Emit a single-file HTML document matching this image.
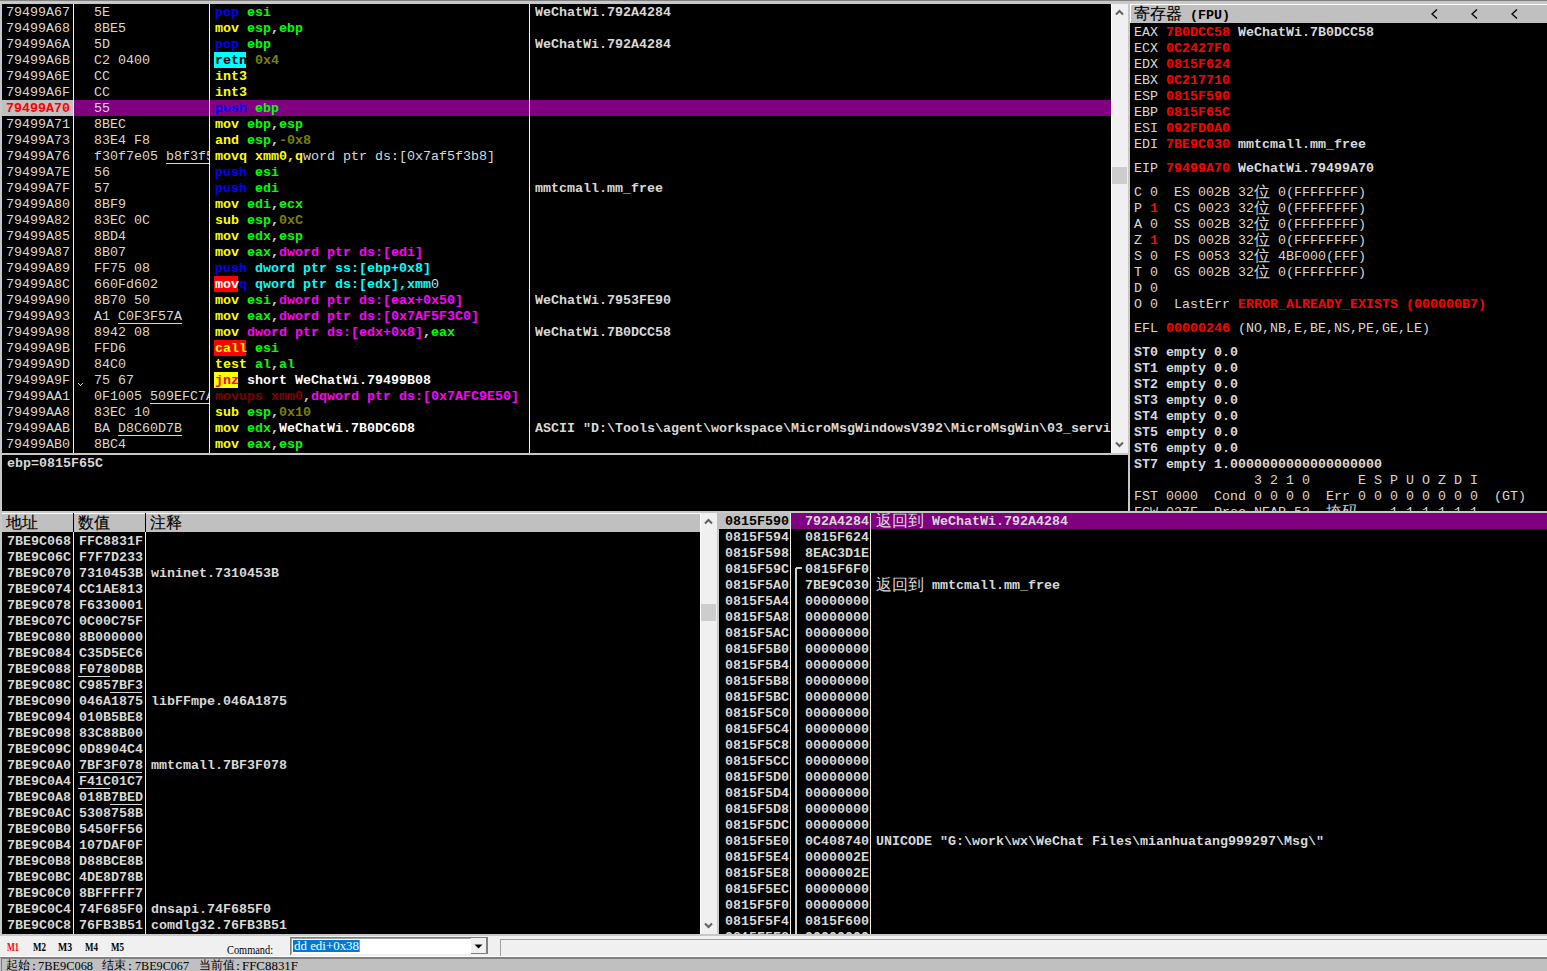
<!DOCTYPE html>
<html><head><meta charset="utf-8"><style>
html,body{margin:0;padding:0}
body{width:1547px;height:971px;position:relative;overflow:hidden;background:#c8c8c8;font-family:"Liberation Mono",monospace;font-size:13.333px;color:#d8d8d8}
.b{position:absolute}
.r{position:absolute;height:16px;line-height:16px;white-space:pre}
.clip{overflow:hidden}
.cj{font-style:normal;display:inline-block;width:16px;text-align:center;font-weight:normal;font-size:16px;line-height:16px;vertical-align:top}
.sf{position:absolute;font-family:"Liberation Serif",serif;font-weight:bold;font-size:12px;line-height:14px;white-space:pre}
.sf2{position:absolute;font-family:"Liberation Serif",serif;font-size:12px;line-height:14px;white-space:pre;color:#000}
.sf3{position:absolute;font-family:"Liberation Serif",serif;font-size:13px;line-height:14px;white-space:pre;color:#fff}
.sf4{position:absolute;font-family:"Liberation Serif",serif;font-size:13px;line-height:14px;white-space:pre;color:#000}
</style></head><body>
<div class="b" style="left:0px;top:0px;width:1547px;height:1px;background:#808080;"></div>
<div class="b" style="left:2px;top:4px;width:1109px;height:449px;background:#000;"></div>
<div class="b" style="left:74px;top:100px;width:1037px;height:16px;background:#800080;"></div>
<div class="b" style="left:2px;top:100px;width:71px;height:16px;background:#c0c0c0;"></div>
<div class="r clip" style="left:6px;top:5px;width:67px"><span style="color:#d8d8d8">79499A67</span></div>
<div class="r clip" style="left:94px;top:5px;width:115px"><span style="color:#d8d8d8">5E</span></div>
<div class="r clip" style="left:215px;top:5px;width:313px"><span style="color:#0000ff;font-weight:bold">pop</span><span style=""> </span><span style="color:#00ff00;font-weight:bold">esi</span></div>
<div class="r clip" style="left:535px;top:5px;width:576px"><span style="color:#d8d8d8;font-weight:bold">WeChatWi.792A4284</span></div>
<div class="r clip" style="left:6px;top:21px;width:67px"><span style="color:#d8d8d8">79499A68</span></div>
<div class="r clip" style="left:94px;top:21px;width:115px"><span style="color:#d8d8d8">8BE5</span></div>
<div class="r clip" style="left:215px;top:21px;width:313px"><span style="color:#ffff00;font-weight:bold">mov</span><span style=""> </span><span style="color:#00ff00;font-weight:bold">esp</span><span style="color:#d8d8d8;font-weight:bold">,</span><span style="color:#00ff00;font-weight:bold">ebp</span></div>
<div class="r clip" style="left:6px;top:37px;width:67px"><span style="color:#d8d8d8">79499A6A</span></div>
<div class="r clip" style="left:94px;top:37px;width:115px"><span style="color:#d8d8d8">5D</span></div>
<div class="r clip" style="left:215px;top:37px;width:313px"><span style="color:#0000ff;font-weight:bold">pop</span><span style=""> </span><span style="color:#00ff00;font-weight:bold">ebp</span></div>
<div class="r clip" style="left:535px;top:37px;width:576px"><span style="color:#d8d8d8;font-weight:bold">WeChatWi.792A4284</span></div>
<div class="r clip" style="left:6px;top:53px;width:67px"><span style="color:#d8d8d8">79499A6B</span></div>
<div class="r clip" style="left:94px;top:53px;width:115px"><span style="color:#d8d8d8">C2 0400</span></div>
<div class="b" style="left:214px;top:52px;width:32px;height:16px;background:#00ffff;"></div>
<div class="r clip" style="left:215px;top:53px;width:313px"><span style="color:#000;font-weight:bold">retn</span><span style=""> </span><span style="color:#808000;font-weight:bold">0x4</span></div>
<div class="r clip" style="left:6px;top:69px;width:67px"><span style="color:#d8d8d8">79499A6E</span></div>
<div class="r clip" style="left:94px;top:69px;width:115px"><span style="color:#d8d8d8">CC</span></div>
<div class="r clip" style="left:215px;top:69px;width:313px"><span style="color:#ffff00;font-weight:bold">int3</span></div>
<div class="r clip" style="left:6px;top:85px;width:67px"><span style="color:#d8d8d8">79499A6F</span></div>
<div class="r clip" style="left:94px;top:85px;width:115px"><span style="color:#d8d8d8">CC</span></div>
<div class="r clip" style="left:215px;top:85px;width:313px"><span style="color:#ffff00;font-weight:bold">int3</span></div>
<div class="r clip" style="left:6px;top:101px;width:67px"><span style="color:#ff0000;font-weight:bold">79499A70</span></div>
<div class="r clip" style="left:94px;top:101px;width:115px"><span style="color:#d8d8d8">55</span></div>
<div class="r clip" style="left:215px;top:101px;width:313px"><span style="color:#0000ff;font-weight:bold">push</span><span style=""> </span><span style="color:#00ff00;font-weight:bold">ebp</span></div>
<div class="r clip" style="left:6px;top:117px;width:67px"><span style="color:#d8d8d8">79499A71</span></div>
<div class="r clip" style="left:94px;top:117px;width:115px"><span style="color:#d8d8d8">8BEC</span></div>
<div class="r clip" style="left:215px;top:117px;width:313px"><span style="color:#ffff00;font-weight:bold">mov</span><span style=""> </span><span style="color:#00ff00;font-weight:bold">ebp</span><span style="color:#d8d8d8;font-weight:bold">,</span><span style="color:#00ff00;font-weight:bold">esp</span></div>
<div class="r clip" style="left:6px;top:133px;width:67px"><span style="color:#d8d8d8">79499A73</span></div>
<div class="r clip" style="left:94px;top:133px;width:115px"><span style="color:#d8d8d8">83E4 F8</span></div>
<div class="r clip" style="left:215px;top:133px;width:313px"><span style="color:#ffff00;font-weight:bold">and</span><span style=""> </span><span style="color:#00ff00;font-weight:bold">esp</span><span style="color:#d8d8d8;font-weight:bold">,</span><span style="color:#808000;font-weight:bold">-0x8</span></div>
<div class="r clip" style="left:6px;top:149px;width:67px"><span style="color:#d8d8d8">79499A76</span></div>
<div class="b" style="left:166px;top:163px;width:43px;height:1px;background:#d8d8d8;"></div>
<div class="r clip" style="left:94px;top:149px;width:115px"><span style="color:#d8d8d8">f30f7e05 </span><span style="color:#d8d8d8">b8f3f5</span></div>
<div class="r clip" style="left:215px;top:149px;width:313px"><span style="color:#ffff00;font-weight:bold">movq xmm0,q</span><span style="color:#d8d8d8">word ptr ds:[0x7af5f3b8]</span></div>
<div class="r clip" style="left:6px;top:165px;width:67px"><span style="color:#d8d8d8">79499A7E</span></div>
<div class="r clip" style="left:94px;top:165px;width:115px"><span style="color:#d8d8d8">56</span></div>
<div class="r clip" style="left:215px;top:165px;width:313px"><span style="color:#0000ff;font-weight:bold">push</span><span style=""> </span><span style="color:#00ff00;font-weight:bold">esi</span></div>
<div class="r clip" style="left:6px;top:181px;width:67px"><span style="color:#d8d8d8">79499A7F</span></div>
<div class="r clip" style="left:94px;top:181px;width:115px"><span style="color:#d8d8d8">57</span></div>
<div class="r clip" style="left:215px;top:181px;width:313px"><span style="color:#0000ff;font-weight:bold">push</span><span style=""> </span><span style="color:#00ff00;font-weight:bold">edi</span></div>
<div class="r clip" style="left:535px;top:181px;width:576px"><span style="color:#d8d8d8;font-weight:bold">mmtcmall.mm_free</span></div>
<div class="r clip" style="left:6px;top:197px;width:67px"><span style="color:#d8d8d8">79499A80</span></div>
<div class="r clip" style="left:94px;top:197px;width:115px"><span style="color:#d8d8d8">8BF9</span></div>
<div class="r clip" style="left:215px;top:197px;width:313px"><span style="color:#ffff00;font-weight:bold">mov</span><span style=""> </span><span style="color:#00ff00;font-weight:bold">edi</span><span style="color:#d8d8d8;font-weight:bold">,</span><span style="color:#00ff00;font-weight:bold">ecx</span></div>
<div class="r clip" style="left:6px;top:213px;width:67px"><span style="color:#d8d8d8">79499A82</span></div>
<div class="r clip" style="left:94px;top:213px;width:115px"><span style="color:#d8d8d8">83EC 0C</span></div>
<div class="r clip" style="left:215px;top:213px;width:313px"><span style="color:#ffff00;font-weight:bold">sub</span><span style=""> </span><span style="color:#00ff00;font-weight:bold">esp</span><span style="color:#d8d8d8;font-weight:bold">,</span><span style="color:#808000;font-weight:bold">0xC</span></div>
<div class="r clip" style="left:6px;top:229px;width:67px"><span style="color:#d8d8d8">79499A85</span></div>
<div class="r clip" style="left:94px;top:229px;width:115px"><span style="color:#d8d8d8">8BD4</span></div>
<div class="r clip" style="left:215px;top:229px;width:313px"><span style="color:#ffff00;font-weight:bold">mov</span><span style=""> </span><span style="color:#00ff00;font-weight:bold">edx</span><span style="color:#d8d8d8;font-weight:bold">,</span><span style="color:#00ff00;font-weight:bold">esp</span></div>
<div class="r clip" style="left:6px;top:245px;width:67px"><span style="color:#d8d8d8">79499A87</span></div>
<div class="r clip" style="left:94px;top:245px;width:115px"><span style="color:#d8d8d8">8B07</span></div>
<div class="r clip" style="left:215px;top:245px;width:313px"><span style="color:#ffff00;font-weight:bold">mov</span><span style=""> </span><span style="color:#00ff00;font-weight:bold">eax</span><span style="color:#d8d8d8;font-weight:bold">,</span><span style="color:#ff00ff;font-weight:bold">dword ptr ds:[edi]</span></div>
<div class="r clip" style="left:6px;top:261px;width:67px"><span style="color:#d8d8d8">79499A89</span></div>
<div class="r clip" style="left:94px;top:261px;width:115px"><span style="color:#d8d8d8">FF75 08</span></div>
<div class="r clip" style="left:215px;top:261px;width:313px"><span style="color:#0000ff;font-weight:bold">push</span><span style=""> </span><span style="color:#00ffff;font-weight:bold">dword ptr ss:[ebp+0x8]</span></div>
<div class="r clip" style="left:6px;top:277px;width:67px"><span style="color:#d8d8d8">79499A8C</span></div>
<div class="r clip" style="left:94px;top:277px;width:115px"><span style="color:#d8d8d8">660Fd602</span></div>
<div class="b" style="left:214px;top:276px;width:24px;height:16px;background:#ff0000;"></div>
<div class="r clip" style="left:215px;top:277px;width:313px"><span style="color:#ffffff;font-weight:bold">mov</span><span style="color:#0000ff;font-weight:bold">q</span><span style=""> </span><span style="color:#00ffff;font-weight:bold">qword ptr ds:[edx],xmm</span><span style="color:#d8d8d8">0</span></div>
<div class="r clip" style="left:6px;top:293px;width:67px"><span style="color:#d8d8d8">79499A90</span></div>
<div class="r clip" style="left:94px;top:293px;width:115px"><span style="color:#d8d8d8">8B70 50</span></div>
<div class="r clip" style="left:215px;top:293px;width:313px"><span style="color:#ffff00;font-weight:bold">mov</span><span style=""> </span><span style="color:#00ff00;font-weight:bold">esi</span><span style="color:#d8d8d8;font-weight:bold">,</span><span style="color:#ff00ff;font-weight:bold">dword ptr ds:[eax+0x50]</span></div>
<div class="r clip" style="left:535px;top:293px;width:576px"><span style="color:#d8d8d8;font-weight:bold">WeChatWi.7953FE90</span></div>
<div class="r clip" style="left:6px;top:309px;width:67px"><span style="color:#d8d8d8">79499A93</span></div>
<div class="b" style="left:118px;top:323px;width:64px;height:1px;background:#d8d8d8;"></div>
<div class="r clip" style="left:94px;top:309px;width:115px"><span style="color:#d8d8d8">A1 </span><span style="color:#d8d8d8">C0F3F57A</span></div>
<div class="r clip" style="left:215px;top:309px;width:313px"><span style="color:#ffff00;font-weight:bold">mov</span><span style=""> </span><span style="color:#00ff00;font-weight:bold">eax</span><span style="color:#d8d8d8;font-weight:bold">,</span><span style="color:#ff00ff;font-weight:bold">dword ptr ds:[0x7AF5F3C0]</span></div>
<div class="r clip" style="left:6px;top:325px;width:67px"><span style="color:#d8d8d8">79499A98</span></div>
<div class="r clip" style="left:94px;top:325px;width:115px"><span style="color:#d8d8d8">8942 08</span></div>
<div class="r clip" style="left:215px;top:325px;width:313px"><span style="color:#ffff00;font-weight:bold">mov</span><span style=""> </span><span style="color:#ff00ff;font-weight:bold">dword ptr ds:[edx+0x8]</span><span style="color:#d8d8d8;font-weight:bold">,</span><span style="color:#00ff00;font-weight:bold">eax</span></div>
<div class="r clip" style="left:535px;top:325px;width:576px"><span style="color:#d8d8d8;font-weight:bold">WeChatWi.7B0DCC58</span></div>
<div class="r clip" style="left:6px;top:341px;width:67px"><span style="color:#d8d8d8">79499A9B</span></div>
<div class="r clip" style="left:94px;top:341px;width:115px"><span style="color:#d8d8d8">FFD6</span></div>
<div class="b" style="left:214px;top:340px;width:32px;height:16px;background:#ff0000;"></div>
<div class="r clip" style="left:215px;top:341px;width:313px"><span style="color:#ffff00;font-weight:bold">call</span><span style=""> </span><span style="color:#00ff00;font-weight:bold">esi</span></div>
<div class="r clip" style="left:6px;top:357px;width:67px"><span style="color:#d8d8d8">79499A9D</span></div>
<div class="r clip" style="left:94px;top:357px;width:115px"><span style="color:#d8d8d8">84C0</span></div>
<div class="r clip" style="left:215px;top:357px;width:313px"><span style="color:#ffff00;font-weight:bold">test</span><span style=""> </span><span style="color:#00ff00;font-weight:bold">al</span><span style="color:#d8d8d8;font-weight:bold">,</span><span style="color:#00ff00;font-weight:bold">al</span></div>
<div class="r clip" style="left:6px;top:373px;width:67px"><span style="color:#d8d8d8">79499A9F</span></div>
<div class="r clip" style="left:94px;top:373px;width:115px"><span style="color:#d8d8d8">75 67</span></div>
<div class="b" style="left:214px;top:372px;width:24px;height:16px;background:#ffff00;"></div>
<div class="r clip" style="left:215px;top:373px;width:313px"><span style="color:#ff0000;font-weight:bold">jnz</span><span style="color:#ffffff;font-weight:bold"> short WeChatWi.79499B08</span></div>
<div class="r clip" style="left:6px;top:389px;width:67px"><span style="color:#d8d8d8">79499AA1</span></div>
<div class="b" style="left:150px;top:403px;width:59px;height:1px;background:#d8d8d8;"></div>
<div class="r clip" style="left:94px;top:389px;width:115px"><span style="color:#d8d8d8">0F1005 </span><span style="color:#d8d8d8">509EFC7A</span></div>
<div class="r clip" style="left:215px;top:389px;width:313px"><span style="color:#800000;font-weight:bold">movups xmm0</span><span style="color:#d8d8d8;font-weight:bold">,</span><span style="color:#ff00ff;font-weight:bold">dqword ptr ds:[0x7AFC9E50]</span></div>
<div class="r clip" style="left:6px;top:405px;width:67px"><span style="color:#d8d8d8">79499AA8</span></div>
<div class="r clip" style="left:94px;top:405px;width:115px"><span style="color:#d8d8d8">83EC 10</span></div>
<div class="r clip" style="left:215px;top:405px;width:313px"><span style="color:#ffff00;font-weight:bold">sub</span><span style=""> </span><span style="color:#00ff00;font-weight:bold">esp</span><span style="color:#d8d8d8;font-weight:bold">,</span><span style="color:#808000;font-weight:bold">0x10</span></div>
<div class="r clip" style="left:6px;top:421px;width:67px"><span style="color:#d8d8d8">79499AAB</span></div>
<div class="b" style="left:118px;top:435px;width:64px;height:1px;background:#d8d8d8;"></div>
<div class="r clip" style="left:94px;top:421px;width:115px"><span style="color:#d8d8d8">BA </span><span style="color:#d8d8d8">D8C60D7B</span></div>
<div class="r clip" style="left:215px;top:421px;width:313px"><span style="color:#ffff00;font-weight:bold">mov</span><span style=""> </span><span style="color:#00ff00;font-weight:bold">edx</span><span style="color:#d8d8d8;font-weight:bold">,</span><span style="color:#ffffff;font-weight:bold">WeChatWi.7B0DC6D8</span></div>
<div class="r clip" style="left:535px;top:421px;width:576px"><span style="color:#d8d8d8;font-weight:bold">ASCII "D:\Tools\agent\workspace\MicroMsgWindowsV392\MicroMsgWin\03_services</span></div>
<div class="r clip" style="left:6px;top:437px;width:67px"><span style="color:#d8d8d8">79499AB0</span></div>
<div class="r clip" style="left:94px;top:437px;width:115px"><span style="color:#d8d8d8">8BC4</span></div>
<div class="r clip" style="left:215px;top:437px;width:313px"><span style="color:#ffff00;font-weight:bold">mov</span><span style=""> </span><span style="color:#00ff00;font-weight:bold">eax</span><span style="color:#d8d8d8;font-weight:bold">,</span><span style="color:#00ff00;font-weight:bold">esp</span></div>
<div class="b" style="left:73px;top:4px;width:1px;height:449px;background:#f0f0f0;"></div>
<div class="b" style="left:209px;top:4px;width:1px;height:449px;background:#f0f0f0;"></div>
<div class="b" style="left:529px;top:4px;width:1px;height:449px;background:#f0f0f0;"></div>
<div class="b" style="left:78px;top:383px;width:1px;height:1px;background:#d0d0d0;"></div>
<div class="b" style="left:79px;top:384px;width:1px;height:1px;background:#d0d0d0;"></div>
<div class="b" style="left:80px;top:385px;width:1px;height:1px;background:#d0d0d0;"></div>
<div class="b" style="left:81px;top:384px;width:1px;height:1px;background:#d0d0d0;"></div>
<div class="b" style="left:82px;top:383px;width:1px;height:1px;background:#d0d0d0;"></div>
<div class="b" style="left:1111px;top:4px;width:17px;height:449px;background:#f0f0f0;"></div>
<div class="b" style="left:1111px;top:4px;width:1px;height:449px;background:#ffffff;"></div>
<div class="b" style="left:1112px;top:167px;width:15px;height:17px;background:#cdcdcd;"></div>
<svg class="b" style="left:1115px;top:9px" width="9" height="7"><path d="M1 5.5 L4.5 2 L8 5.5" stroke="#606060" fill="none" stroke-width="2"/></svg>
<svg class="b" style="left:1115px;top:441px" width="9" height="7"><path d="M1 1.5 L4.5 5 L8 1.5" stroke="#606060" fill="none" stroke-width="2"/></svg>
<div class="b" style="left:2px;top:455px;width:1126px;height:56px;background:#000;"></div>
<div class="r" style="left:7px;top:456px;"><span style="color:#d8d8d8;font-weight:bold">ebp=0815F65C</span></div>
<div class="b" style="left:1130px;top:4px;width:417px;height:507px;background:#000;"></div>
<div class="b" style="left:1130px;top:4px;width:417px;height:19px;background:#c0c0c0;"></div>
<div class="b" style="left:1130px;top:4px;width:417px;height:1px;background:#ffffff;"></div>
<div class="b" style="left:1130px;top:4px;width:1px;height:19px;background:#ffffff;"></div>
<div class="r" style="left:1134px;top:7px;line-height:18px;height:18px"><span style="color:#000;-webkit-text-stroke:0.15px #000"><i class="cj">寄</i><i class="cj">存</i><i class="cj">器</i> </span><span style="color:#000;font-weight:bold">(FPU)</span></div>
<svg class="b" style="left:1431px;top:9px" width="7" height="10"><path d="M6 0.5 L1 5 L6 9.5" stroke="#000" fill="none" stroke-width="1.3"/></svg>
<svg class="b" style="left:1471px;top:9px" width="7" height="10"><path d="M6 0.5 L1 5 L6 9.5" stroke="#000" fill="none" stroke-width="1.3"/></svg>
<svg class="b" style="left:1511px;top:9px" width="7" height="10"><path d="M6 0.5 L1 5 L6 9.5" stroke="#000" fill="none" stroke-width="1.3"/></svg>
<div class="r" style="left:1134px;top:25px;"><span style="color:#d8d8d8">EAX </span><span style="color:#ff0000;font-weight:bold">7B0DCC58</span><span style="color:#d8d8d8;font-weight:bold"> WeChatWi.7B0DCC58</span></div>
<div class="r" style="left:1134px;top:41px;"><span style="color:#d8d8d8">ECX </span><span style="color:#ff0000;font-weight:bold">0C2427F0</span></div>
<div class="r" style="left:1134px;top:57px;"><span style="color:#d8d8d8">EDX </span><span style="color:#ff0000;font-weight:bold">0815F624</span></div>
<div class="r" style="left:1134px;top:73px;"><span style="color:#d8d8d8">EBX </span><span style="color:#ff0000;font-weight:bold">0C217710</span></div>
<div class="r" style="left:1134px;top:89px;"><span style="color:#d8d8d8">ESP </span><span style="color:#ff0000;font-weight:bold">0815F590</span></div>
<div class="r" style="left:1134px;top:105px;"><span style="color:#d8d8d8">EBP </span><span style="color:#ff0000;font-weight:bold">0815F65C</span></div>
<div class="r" style="left:1134px;top:121px;"><span style="color:#d8d8d8">ESI </span><span style="color:#ff0000;font-weight:bold">092FD0A0</span></div>
<div class="r" style="left:1134px;top:137px;"><span style="color:#d8d8d8">EDI </span><span style="color:#ff0000;font-weight:bold">7BE9C030</span><span style="color:#d8d8d8;font-weight:bold"> mmtcmall.mm_free</span></div>
<div class="r" style="left:1134px;top:161px;"><span style="color:#d8d8d8">EIP </span><span style="color:#ff0000;font-weight:bold">79499A70</span><span style="color:#d8d8d8;font-weight:bold"> WeChatWi.79499A70</span></div>
<div class="r" style="left:1134px;top:185px;"><span style="color:#d8d8d8">C </span><span style="color:#d8d8d8">0</span><span style="color:#d8d8d8">  ES 002B 32</span><span style="color:#d8d8d8"><i class="cj">位</i></span><span style="color:#d8d8d8"> 0(FFFFFFFF)</span></div>
<div class="r" style="left:1134px;top:201px;"><span style="color:#d8d8d8">P </span><span style="color:#ff0000;font-weight:bold">1</span><span style="color:#d8d8d8">  CS 0023 32</span><span style="color:#d8d8d8"><i class="cj">位</i></span><span style="color:#d8d8d8"> 0(FFFFFFFF)</span></div>
<div class="r" style="left:1134px;top:217px;"><span style="color:#d8d8d8">A </span><span style="color:#d8d8d8">0</span><span style="color:#d8d8d8">  SS 002B 32</span><span style="color:#d8d8d8"><i class="cj">位</i></span><span style="color:#d8d8d8"> 0(FFFFFFFF)</span></div>
<div class="r" style="left:1134px;top:233px;"><span style="color:#d8d8d8">Z </span><span style="color:#ff0000;font-weight:bold">1</span><span style="color:#d8d8d8">  DS 002B 32</span><span style="color:#d8d8d8"><i class="cj">位</i></span><span style="color:#d8d8d8"> 0(FFFFFFFF)</span></div>
<div class="r" style="left:1134px;top:249px;"><span style="color:#d8d8d8">S </span><span style="color:#d8d8d8">0</span><span style="color:#d8d8d8">  FS 0053 32</span><span style="color:#d8d8d8"><i class="cj">位</i></span><span style="color:#d8d8d8"> 4BF000(FFF)</span></div>
<div class="r" style="left:1134px;top:265px;"><span style="color:#d8d8d8">T </span><span style="color:#d8d8d8">0</span><span style="color:#d8d8d8">  GS 002B 32</span><span style="color:#d8d8d8"><i class="cj">位</i></span><span style="color:#d8d8d8"> 0(FFFFFFFF)</span></div>
<div class="r" style="left:1134px;top:281px;"><span style="color:#d8d8d8">D </span><span style="color:#d8d8d8">0</span></div>
<div class="r" style="left:1134px;top:297px;"><span style="color:#d8d8d8">O 0  LastErr </span><span style="color:#ff0000;font-weight:bold">ERROR_ALREADY_EXISTS (000000B7)</span></div>
<div class="r" style="left:1134px;top:321px;"><span style="color:#d8d8d8">EFL </span><span style="color:#ff0000;font-weight:bold">00000246</span><span style="color:#d8d8d8"> (NO,NB,E,BE,NS,PE,GE,LE)</span></div>
<div class="r" style="left:1134px;top:345px;"><span style="color:#d8d8d8;font-weight:bold">ST0 empty 0.0</span></div>
<div class="r" style="left:1134px;top:361px;"><span style="color:#d8d8d8;font-weight:bold">ST1 empty 0.0</span></div>
<div class="r" style="left:1134px;top:377px;"><span style="color:#d8d8d8;font-weight:bold">ST2 empty 0.0</span></div>
<div class="r" style="left:1134px;top:393px;"><span style="color:#d8d8d8;font-weight:bold">ST3 empty 0.0</span></div>
<div class="r" style="left:1134px;top:409px;"><span style="color:#d8d8d8;font-weight:bold">ST4 empty 0.0</span></div>
<div class="r" style="left:1134px;top:425px;"><span style="color:#d8d8d8;font-weight:bold">ST5 empty 0.0</span></div>
<div class="r" style="left:1134px;top:441px;"><span style="color:#d8d8d8;font-weight:bold">ST6 empty 0.0</span></div>
<div class="r" style="left:1134px;top:457px;"><span style="color:#d8d8d8;font-weight:bold">ST7 empty 1.0000000000000000000</span></div>
<div class="r" style="left:1134px;top:473px;"><span style="color:#d8d8d8">               3 2 1 0      E S P U O Z D I</span></div>
<div class="r" style="left:1134px;top:489px;"><span style="color:#d8d8d8">FST 0000  Cond 0 0 0 0  Err 0 0 0 0 0 0 0 0  (GT)</span></div>
<div class="r" style="left:1134px;top:505px;"><span style="color:#d8d8d8">FCW 027F  Prec NEAR,53  <i class="cj">掩</i><i class="cj">码</i>    1 1 1 1 1 1</span></div>
<div class="b" style="left:1130px;top:511px;width:417px;height:2px;background:#c8c8c8;"></div>
<div class="b" style="left:2px;top:513px;width:698px;height:421px;background:#000;"></div>
<div class="b" style="left:2px;top:513px;width:698px;height:19px;background:#c0c0c0;"></div>
<div class="b" style="left:2px;top:513px;width:698px;height:1px;background:#ffffff;"></div>
<div class="b" style="left:73px;top:513px;width:1px;height:19px;background:#000;"></div>
<div class="b" style="left:73px;top:532px;width:1px;height:402px;background:#f0f0f0;"></div>
<div class="b" style="left:145px;top:513px;width:1px;height:19px;background:#000;"></div>
<div class="b" style="left:145px;top:532px;width:1px;height:402px;background:#f0f0f0;"></div>
<div class="r" style="left:6px;top:516px;line-height:18px;height:18px"><span style="color:#000;-webkit-text-stroke:0.15px #000"><i class="cj">地</i><i class="cj">址</i></span></div>
<div class="r" style="left:78px;top:516px;line-height:18px;height:18px"><span style="color:#000;-webkit-text-stroke:0.15px #000"><i class="cj">数</i><i class="cj">值</i></span></div>
<div class="r" style="left:150px;top:516px;line-height:18px;height:18px"><span style="color:#000;-webkit-text-stroke:0.15px #000"><i class="cj">注</i><i class="cj">释</i></span></div>
<div class="r" style="left:7px;top:534px;"><span style="color:#d8d8d8;font-weight:bold">7BE9C068</span></div>
<div class="r" style="left:79px;top:534px;"><span style="color:#d8d8d8;font-weight:bold">FFC8831F</span></div>
<div class="r" style="left:7px;top:550px;"><span style="color:#d8d8d8;font-weight:bold">7BE9C06C</span></div>
<div class="r" style="left:79px;top:550px;"><span style="color:#d8d8d8;font-weight:bold">F7F7D233</span></div>
<div class="r" style="left:7px;top:566px;"><span style="color:#d8d8d8;font-weight:bold">7BE9C070</span></div>
<div class="r" style="left:79px;top:566px;"><span style="color:#d8d8d8;font-weight:bold">7310453B</span></div>
<div class="r" style="left:151px;top:566px;"><span style="color:#d8d8d8;font-weight:bold">wininet.7310453B</span></div>
<div class="r" style="left:7px;top:582px;"><span style="color:#d8d8d8;font-weight:bold">7BE9C074</span></div>
<div class="r" style="left:79px;top:582px;"><span style="color:#d8d8d8;font-weight:bold">CC1AE813</span></div>
<div class="r" style="left:7px;top:598px;"><span style="color:#d8d8d8;font-weight:bold">7BE9C078</span></div>
<div class="r" style="left:79px;top:598px;"><span style="color:#d8d8d8;font-weight:bold">F6330001</span></div>
<div class="r" style="left:7px;top:614px;"><span style="color:#d8d8d8;font-weight:bold">7BE9C07C</span></div>
<div class="r" style="left:79px;top:614px;"><span style="color:#d8d8d8;font-weight:bold">0C00C75F</span></div>
<div class="r" style="left:7px;top:630px;"><span style="color:#d8d8d8;font-weight:bold">7BE9C080</span></div>
<div class="r" style="left:79px;top:630px;"><span style="color:#d8d8d8;font-weight:bold">8B000000</span></div>
<div class="r" style="left:7px;top:646px;"><span style="color:#d8d8d8;font-weight:bold">7BE9C084</span></div>
<div class="r" style="left:79px;top:646px;"><span style="color:#d8d8d8;font-weight:bold">C35D5EC6</span></div>
<div class="r" style="left:7px;top:662px;"><span style="color:#d8d8d8;font-weight:bold">7BE9C088</span></div>
<div class="b" style="left:78px;top:676px;width:32px;height:1px;background:#d8d8d8;"></div>
<div class="r" style="left:79px;top:662px;"><span style="color:#d8d8d8;font-weight:bold"></span><span style="color:#d8d8d8;font-weight:bold">F078</span><span style="color:#d8d8d8;font-weight:bold">0D8B</span></div>
<div class="r" style="left:7px;top:678px;"><span style="color:#d8d8d8;font-weight:bold">7BE9C08C</span></div>
<div class="b" style="left:110px;top:692px;width:32px;height:1px;background:#d8d8d8;"></div>
<div class="r" style="left:79px;top:678px;"><span style="color:#d8d8d8;font-weight:bold">C985</span><span style="color:#d8d8d8;font-weight:bold">7BF3</span><span style="color:#d8d8d8;font-weight:bold"></span></div>
<div class="r" style="left:7px;top:694px;"><span style="color:#d8d8d8;font-weight:bold">7BE9C090</span></div>
<div class="r" style="left:79px;top:694px;"><span style="color:#d8d8d8;font-weight:bold">046A1875</span></div>
<div class="r" style="left:151px;top:694px;"><span style="color:#d8d8d8;font-weight:bold">libFFmpe.046A1875</span></div>
<div class="r" style="left:7px;top:710px;"><span style="color:#d8d8d8;font-weight:bold">7BE9C094</span></div>
<div class="r" style="left:79px;top:710px;"><span style="color:#d8d8d8;font-weight:bold">010B5BE8</span></div>
<div class="r" style="left:7px;top:726px;"><span style="color:#d8d8d8;font-weight:bold">7BE9C098</span></div>
<div class="r" style="left:79px;top:726px;"><span style="color:#d8d8d8;font-weight:bold">83C88B00</span></div>
<div class="r" style="left:7px;top:742px;"><span style="color:#d8d8d8;font-weight:bold">7BE9C09C</span></div>
<div class="r" style="left:79px;top:742px;"><span style="color:#d8d8d8;font-weight:bold">0D8904C4</span></div>
<div class="r" style="left:7px;top:758px;"><span style="color:#d8d8d8;font-weight:bold">7BE9C0A0</span></div>
<div class="b" style="left:78px;top:772px;width:64px;height:1px;background:#d8d8d8;"></div>
<div class="r" style="left:79px;top:758px;"><span style="color:#d8d8d8;font-weight:bold"></span><span style="color:#d8d8d8;font-weight:bold">7BF3F078</span><span style="color:#d8d8d8;font-weight:bold"></span></div>
<div class="r" style="left:151px;top:758px;"><span style="color:#d8d8d8;font-weight:bold">mmtcmall.7BF3F078</span></div>
<div class="r" style="left:7px;top:774px;"><span style="color:#d8d8d8;font-weight:bold">7BE9C0A4</span></div>
<div class="b" style="left:78px;top:788px;width:32px;height:1px;background:#d8d8d8;"></div>
<div class="r" style="left:79px;top:774px;"><span style="color:#d8d8d8;font-weight:bold"></span><span style="color:#d8d8d8;font-weight:bold">F41C</span><span style="color:#d8d8d8;font-weight:bold">01C7</span></div>
<div class="r" style="left:7px;top:790px;"><span style="color:#d8d8d8;font-weight:bold">7BE9C0A8</span></div>
<div class="b" style="left:110px;top:804px;width:32px;height:1px;background:#d8d8d8;"></div>
<div class="r" style="left:79px;top:790px;"><span style="color:#d8d8d8;font-weight:bold">018B</span><span style="color:#d8d8d8;font-weight:bold">7BED</span><span style="color:#d8d8d8;font-weight:bold"></span></div>
<div class="r" style="left:7px;top:806px;"><span style="color:#d8d8d8;font-weight:bold">7BE9C0AC</span></div>
<div class="r" style="left:79px;top:806px;"><span style="color:#d8d8d8;font-weight:bold">5308758B</span></div>
<div class="r" style="left:7px;top:822px;"><span style="color:#d8d8d8;font-weight:bold">7BE9C0B0</span></div>
<div class="r" style="left:79px;top:822px;"><span style="color:#d8d8d8;font-weight:bold">5450FF56</span></div>
<div class="r" style="left:7px;top:838px;"><span style="color:#d8d8d8;font-weight:bold">7BE9C0B4</span></div>
<div class="r" style="left:79px;top:838px;"><span style="color:#d8d8d8;font-weight:bold">107DAF0F</span></div>
<div class="r" style="left:7px;top:854px;"><span style="color:#d8d8d8;font-weight:bold">7BE9C0B8</span></div>
<div class="r" style="left:79px;top:854px;"><span style="color:#d8d8d8;font-weight:bold">D88BCE8B</span></div>
<div class="r" style="left:7px;top:870px;"><span style="color:#d8d8d8;font-weight:bold">7BE9C0BC</span></div>
<div class="r" style="left:79px;top:870px;"><span style="color:#d8d8d8;font-weight:bold">4DE8D78B</span></div>
<div class="r" style="left:7px;top:886px;"><span style="color:#d8d8d8;font-weight:bold">7BE9C0C0</span></div>
<div class="r" style="left:79px;top:886px;"><span style="color:#d8d8d8;font-weight:bold">8BFFFFF7</span></div>
<div class="r" style="left:7px;top:902px;"><span style="color:#d8d8d8;font-weight:bold">7BE9C0C4</span></div>
<div class="r" style="left:79px;top:902px;"><span style="color:#d8d8d8;font-weight:bold">74F685F0</span></div>
<div class="r" style="left:151px;top:902px;"><span style="color:#d8d8d8;font-weight:bold">dnsapi.74F685F0</span></div>
<div class="r" style="left:7px;top:918px;"><span style="color:#d8d8d8;font-weight:bold">7BE9C0C8</span></div>
<div class="r" style="left:79px;top:918px;"><span style="color:#d8d8d8;font-weight:bold">76FB3B51</span></div>
<div class="r" style="left:151px;top:918px;"><span style="color:#d8d8d8;font-weight:bold">comdlg32.76FB3B51</span></div>
<div class="b" style="left:700px;top:513px;width:1px;height:421px;background:#ffffff;"></div>
<div class="b" style="left:701px;top:513px;width:16px;height:421px;background:#f0f0f0;"></div>
<div class="b" style="left:701px;top:604px;width:15px;height:17px;background:#cdcdcd;"></div>
<svg class="b" style="left:704px;top:518px" width="9" height="7"><path d="M1 5.5 L4.5 2 L8 5.5" stroke="#606060" fill="none" stroke-width="2"/></svg>
<svg class="b" style="left:704px;top:922px" width="9" height="7"><path d="M1 1.5 L4.5 5 L8 1.5" stroke="#606060" fill="none" stroke-width="2"/></svg>
<div class="b" style="left:719px;top:513px;width:828px;height:421px;background:#000;"></div>
<div class="b" style="left:791px;top:513px;width:756px;height:16px;background:#800080;"></div>
<div class="b" style="left:717px;top:513px;width:73px;height:16px;background:#c0c0c0;"></div>
<div class="b" style="left:790px;top:513px;width:1px;height:421px;background:#f0f0f0;"></div>
<div class="b" style="left:870px;top:513px;width:1px;height:421px;background:#f0f0f0;"></div>
<div class="r" style="left:725px;top:514px;"><span style="color:#000;font-weight:bold">0815F590</span></div>
<div class="r" style="left:805px;top:514px;"><span style="color:#d8d8d8;font-weight:bold">792A4284</span></div>
<div class="r" style="left:876px;top:514px;"><span style="color:#d8d8d8;font-weight:bold"><i class="cj">返</i><i class="cj">回</i><i class="cj">到</i> WeChatWi.792A4284</span></div>
<div class="r" style="left:725px;top:530px;"><span style="color:#d8d8d8;font-weight:bold">0815F594</span></div>
<div class="r" style="left:805px;top:530px;"><span style="color:#d8d8d8;font-weight:bold">0815F624</span></div>
<div class="r" style="left:725px;top:546px;"><span style="color:#d8d8d8;font-weight:bold">0815F598</span></div>
<div class="r" style="left:805px;top:546px;"><span style="color:#d8d8d8;font-weight:bold">8EAC3D1E</span></div>
<div class="r" style="left:725px;top:562px;"><span style="color:#d8d8d8;font-weight:bold">0815F59C</span></div>
<div class="r" style="left:805px;top:562px;"><span style="color:#d8d8d8;font-weight:bold">0815F6F0</span></div>
<div class="r" style="left:725px;top:578px;"><span style="color:#d8d8d8;font-weight:bold">0815F5A0</span></div>
<div class="r" style="left:805px;top:578px;"><span style="color:#d8d8d8;font-weight:bold">7BE9C030</span></div>
<div class="r" style="left:876px;top:578px;"><span style="color:#d8d8d8;font-weight:bold"><i class="cj">返</i><i class="cj">回</i><i class="cj">到</i> mmtcmall.mm_free</span></div>
<div class="r" style="left:725px;top:594px;"><span style="color:#d8d8d8;font-weight:bold">0815F5A4</span></div>
<div class="r" style="left:805px;top:594px;"><span style="color:#d8d8d8;font-weight:bold">00000000</span></div>
<div class="r" style="left:725px;top:610px;"><span style="color:#d8d8d8;font-weight:bold">0815F5A8</span></div>
<div class="r" style="left:805px;top:610px;"><span style="color:#d8d8d8;font-weight:bold">00000000</span></div>
<div class="r" style="left:725px;top:626px;"><span style="color:#d8d8d8;font-weight:bold">0815F5AC</span></div>
<div class="r" style="left:805px;top:626px;"><span style="color:#d8d8d8;font-weight:bold">00000000</span></div>
<div class="r" style="left:725px;top:642px;"><span style="color:#d8d8d8;font-weight:bold">0815F5B0</span></div>
<div class="r" style="left:805px;top:642px;"><span style="color:#d8d8d8;font-weight:bold">00000000</span></div>
<div class="r" style="left:725px;top:658px;"><span style="color:#d8d8d8;font-weight:bold">0815F5B4</span></div>
<div class="r" style="left:805px;top:658px;"><span style="color:#d8d8d8;font-weight:bold">00000000</span></div>
<div class="r" style="left:725px;top:674px;"><span style="color:#d8d8d8;font-weight:bold">0815F5B8</span></div>
<div class="r" style="left:805px;top:674px;"><span style="color:#d8d8d8;font-weight:bold">00000000</span></div>
<div class="r" style="left:725px;top:690px;"><span style="color:#d8d8d8;font-weight:bold">0815F5BC</span></div>
<div class="r" style="left:805px;top:690px;"><span style="color:#d8d8d8;font-weight:bold">00000000</span></div>
<div class="r" style="left:725px;top:706px;"><span style="color:#d8d8d8;font-weight:bold">0815F5C0</span></div>
<div class="r" style="left:805px;top:706px;"><span style="color:#d8d8d8;font-weight:bold">00000000</span></div>
<div class="r" style="left:725px;top:722px;"><span style="color:#d8d8d8;font-weight:bold">0815F5C4</span></div>
<div class="r" style="left:805px;top:722px;"><span style="color:#d8d8d8;font-weight:bold">00000000</span></div>
<div class="r" style="left:725px;top:738px;"><span style="color:#d8d8d8;font-weight:bold">0815F5C8</span></div>
<div class="r" style="left:805px;top:738px;"><span style="color:#d8d8d8;font-weight:bold">00000000</span></div>
<div class="r" style="left:725px;top:754px;"><span style="color:#d8d8d8;font-weight:bold">0815F5CC</span></div>
<div class="r" style="left:805px;top:754px;"><span style="color:#d8d8d8;font-weight:bold">00000000</span></div>
<div class="r" style="left:725px;top:770px;"><span style="color:#d8d8d8;font-weight:bold">0815F5D0</span></div>
<div class="r" style="left:805px;top:770px;"><span style="color:#d8d8d8;font-weight:bold">00000000</span></div>
<div class="r" style="left:725px;top:786px;"><span style="color:#d8d8d8;font-weight:bold">0815F5D4</span></div>
<div class="r" style="left:805px;top:786px;"><span style="color:#d8d8d8;font-weight:bold">00000000</span></div>
<div class="r" style="left:725px;top:802px;"><span style="color:#d8d8d8;font-weight:bold">0815F5D8</span></div>
<div class="r" style="left:805px;top:802px;"><span style="color:#d8d8d8;font-weight:bold">00000000</span></div>
<div class="r" style="left:725px;top:818px;"><span style="color:#d8d8d8;font-weight:bold">0815F5DC</span></div>
<div class="r" style="left:805px;top:818px;"><span style="color:#d8d8d8;font-weight:bold">00000000</span></div>
<div class="r" style="left:725px;top:834px;"><span style="color:#d8d8d8;font-weight:bold">0815F5E0</span></div>
<div class="r" style="left:805px;top:834px;"><span style="color:#d8d8d8;font-weight:bold">0C408740</span></div>
<div class="r" style="left:876px;top:834px;"><span style="color:#d8d8d8;font-weight:bold">UNICODE "G:\work\wx\WeChat Files\mianhuatang999297\Msg\"</span></div>
<div class="r" style="left:725px;top:850px;"><span style="color:#d8d8d8;font-weight:bold">0815F5E4</span></div>
<div class="r" style="left:805px;top:850px;"><span style="color:#d8d8d8;font-weight:bold">0000002E</span></div>
<div class="r" style="left:725px;top:866px;"><span style="color:#d8d8d8;font-weight:bold">0815F5E8</span></div>
<div class="r" style="left:805px;top:866px;"><span style="color:#d8d8d8;font-weight:bold">0000002E</span></div>
<div class="r" style="left:725px;top:882px;"><span style="color:#d8d8d8;font-weight:bold">0815F5EC</span></div>
<div class="r" style="left:805px;top:882px;"><span style="color:#d8d8d8;font-weight:bold">00000000</span></div>
<div class="r" style="left:725px;top:898px;"><span style="color:#d8d8d8;font-weight:bold">0815F5F0</span></div>
<div class="r" style="left:805px;top:898px;"><span style="color:#d8d8d8;font-weight:bold">00000000</span></div>
<div class="r" style="left:725px;top:914px;"><span style="color:#d8d8d8;font-weight:bold">0815F5F4</span></div>
<div class="r" style="left:805px;top:914px;"><span style="color:#d8d8d8;font-weight:bold">0815F600</span></div>
<div class="r" style="left:725px;top:930px;"><span style="color:#d8d8d8;font-weight:bold">0815F5F8</span></div>
<div class="r" style="left:805px;top:930px;"><span style="color:#d8d8d8;font-weight:bold">00000000</span></div>
<div class="b" style="left:795px;top:568px;width:2px;height:366px;background:#d0d0d0;"></div>
<div class="b" style="left:796px;top:567px;width:6px;height:2px;background:#d0d0d0;"></div>
<div class="b" style="left:717px;top:529px;width:2px;height:405px;background:#c8c8c8;"></div>
<div class="b" style="left:0px;top:934px;width:1547px;height:2px;background:#c8c8c8;"></div>
<div class="b" style="left:0px;top:936px;width:1547px;height:20px;background:#f0f0f0;"></div>
<div class="b" style="left:0px;top:956px;width:1547px;height:1px;background:#ffffff;"></div>
<div class="b" style="left:0px;top:957px;width:1547px;height:1px;background:#808080;"></div>
<div class="b" style="left:7px;top:940px;font-family:'Liberation Serif',serif;font-size:12px;line-height:14px;white-space:pre;color:#ff0000;font-weight:bold;transform:scaleX(0.6925);transform-origin:0 0">M1</div>
<div class="b" style="left:33px;top:940px;font-family:'Liberation Serif',serif;font-size:12px;line-height:14px;white-space:pre;color:#000;font-weight:bold;transform:scaleX(0.7502);transform-origin:0 0">M2</div>
<div class="b" style="left:58px;top:940px;font-family:'Liberation Serif',serif;font-size:12px;line-height:14px;white-space:pre;color:#000;font-weight:bold;transform:scaleX(0.8079);transform-origin:0 0">M3</div>
<div class="b" style="left:85px;top:940px;font-family:'Liberation Serif',serif;font-size:12px;line-height:14px;white-space:pre;color:#000;font-weight:bold;transform:scaleX(0.7502);transform-origin:0 0">M4</div>
<div class="b" style="left:111px;top:940px;font-family:'Liberation Serif',serif;font-size:12px;line-height:14px;white-space:pre;color:#000;font-weight:bold;transform:scaleX(0.7502);transform-origin:0 0">M5</div>
<div class="b" style="left:227px;top:943px;font-family:'Liberation Serif',serif;font-size:12px;line-height:14px;white-space:pre;color:#000;transform:scaleX(0.8628);transform-origin:0 0">Command:</div>
<div class="b" style="left:290px;top:937px;width:198px;height:18px;background:#808080;"></div>
<div class="b" style="left:291px;top:938px;width:196px;height:16px;background:#ffffff;"></div>
<div class="b" style="left:291px;top:938px;width:196px;height:1px;background:#a0a0a0;"></div>
<div class="b" style="left:291px;top:938px;width:1px;height:16px;background:#a0a0a0;"></div>
<div class="b" style="left:291px;top:954px;width:197px;height:1px;background:#f0f0f0;"></div>
<div class="b" style="left:293px;top:940px;width:67px;height:12px;background:#0078d7;"></div>
<div class="b" style="left:294px;top:939px;font-family:'Liberation Serif',serif;font-size:13px;line-height:14px;white-space:pre;color:#fff;transform:scaleX(0.9931);transform-origin:0 0">dd edi+0x38</div>
<div class="b" style="left:359px;top:940px;width:1px;height:12px;background:#ff8000;"></div>
<div class="b" style="left:471px;top:938px;width:16px;height:16px;background:#f0f0f0;"></div>
<div class="b" style="left:471px;top:953px;width:16px;height:1px;background:#808080;"></div>
<div class="b" style="left:486px;top:938px;width:1px;height:16px;background:#808080;"></div>
<svg class="b" style="left:474px;top:944px" width="10" height="6"><path d="M0.5 0.5 L8.5 0.5 L4.5 4.5 Z" fill="#000"/></svg>
<div class="b" style="left:500px;top:939px;width:1047px;height:1px;background:#a0a0a0;"></div>
<div class="b" style="left:500px;top:939px;width:1px;height:17px;background:#a0a0a0;"></div>
<div class="b" style="left:0px;top:958px;width:1547px;height:13px;background:#c0c0c0;"></div>
<div class="b" style="left:1px;top:958px;width:1546px;height:1px;background:#808080;"></div>
<div class="b" style="left:1px;top:958px;width:1px;height:13px;background:#808080;"></div>
<div class="b" style="left:6px;top:959px;font-size:12px;line-height:14px;white-space:pre;color:#000">起始</div>
<div class="b" style="left:32px;top:959px;font-family:'Liberation Serif',serif;font-size:12px;line-height:14px;white-space:pre;color:#000;transform:scaleX(1.2019);transform-origin:0 0">:</div>
<div class="b" style="left:38px;top:959px;font-family:'Liberation Serif',serif;font-size:12px;line-height:14px;white-space:pre;color:#000;transform:scaleX(1.0314);transform-origin:0 0">7BE9C068</div>
<div class="b" style="left:102px;top:959px;font-size:12px;line-height:14px;white-space:pre;color:#000">结束</div>
<div class="b" style="left:128px;top:959px;font-family:'Liberation Serif',serif;font-size:12px;line-height:14px;white-space:pre;color:#000;transform:scaleX(1.2019);transform-origin:0 0">:</div>
<div class="b" style="left:135px;top:959px;font-family:'Liberation Serif',serif;font-size:12px;line-height:14px;white-space:pre;color:#000;transform:scaleX(1.0126);transform-origin:0 0">7BE9C067</div>
<div class="b" style="left:199px;top:959px;font-size:12px;line-height:14px;white-space:pre;color:#000">当前值</div>
<div class="b" style="left:236px;top:959px;font-family:'Liberation Serif',serif;font-size:12px;line-height:14px;white-space:pre;color:#000;transform:scaleX(1.2019);transform-origin:0 0">:</div>
<div class="b" style="left:242px;top:959px;font-family:'Liberation Serif',serif;font-size:12px;line-height:14px;white-space:pre;color:#000;transform:scaleX(1.0766);transform-origin:0 0">FFC8831F</div>
</body></html>
